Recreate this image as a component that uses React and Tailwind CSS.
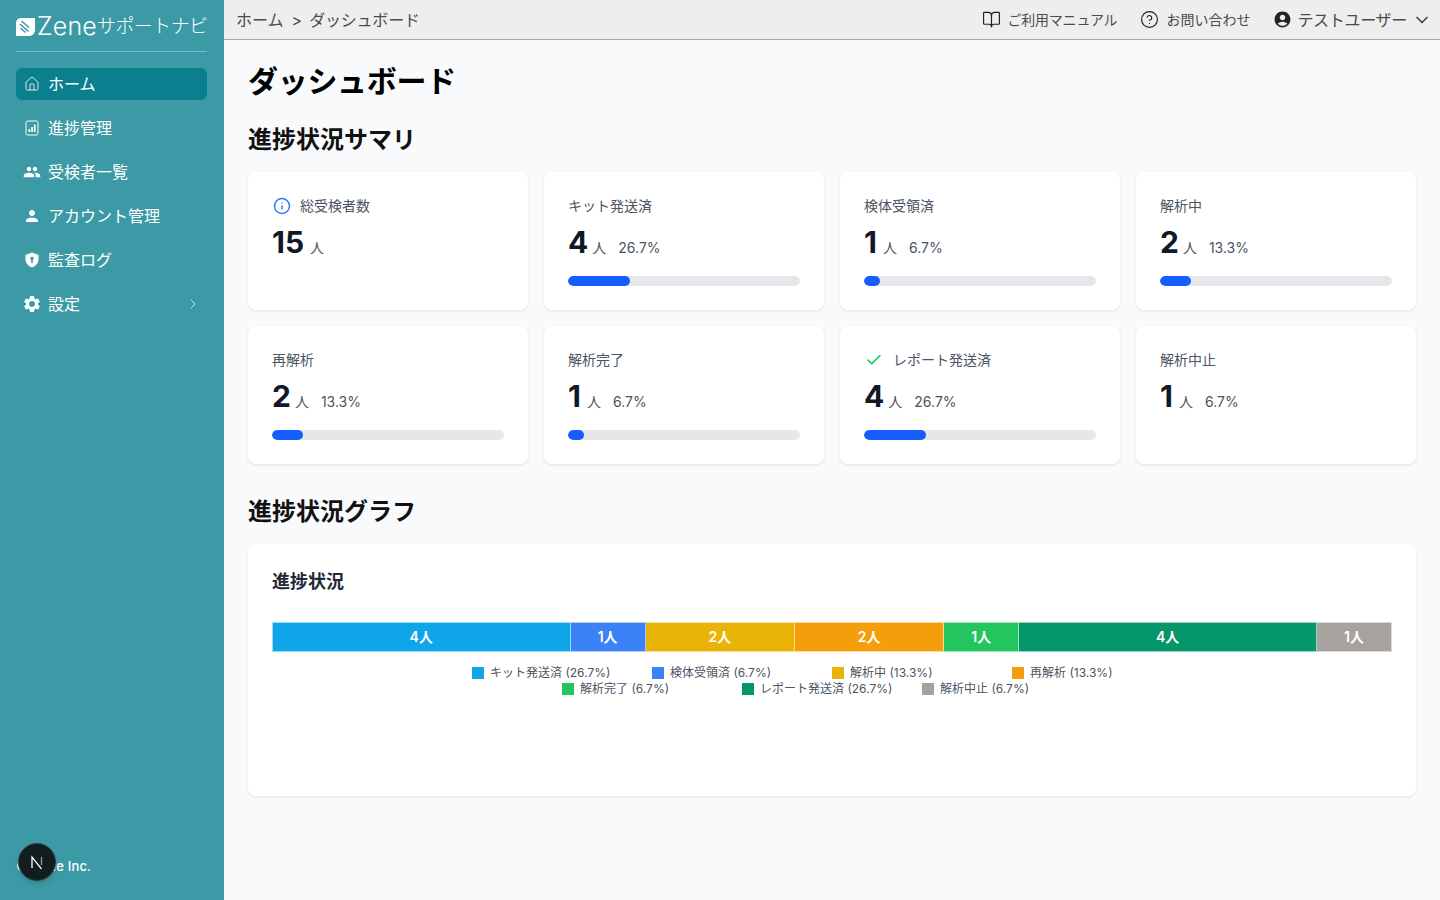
import React from "react";
import { BookOpen, Check, ChevronDown, ChevronRight, CircleHelp, House, Info } from "lucide-react";
import { MdAccountCircle, MdPeople, MdPerson, MdSettings } from "react-icons/md";

const font = "font-['Inter','Noto_Sans_CJK_JP',sans-serif]";

const ProgressIcon = () => (
	<svg viewBox="0 0 16 16" className="h-4 w-4" fill="none">
		<rect x="2" y="1" width="12" height="14" rx="1.5" stroke="white" strokeWidth="1" />
		<rect x="4.5" y="9" width="1.7" height="3" fill="white" />
		<rect x="7.2" y="7" width="1.7" height="5" fill="white" />
		<rect x="9.9" y="4.5" width="1.7" height="7.5" fill="white" />
	</svg>
);

const ShieldIcon = () => (
	<svg viewBox="0 0 16 16" className="h-4 w-4">
		<path
			fillRule="evenodd"
			fill="white"
			d="M8 .5 14.5 3v4.6c0 3.6-2.7 6.7-6.5 7.9-3.8-1.2-6.5-4.3-6.5-7.9V3L8 .5Zm0 4.2a1.7 1.7 0 0 0-.8 3.2V11h1.6V7.9A1.7 1.7 0 0 0 8 4.7Z"
		/>
	</svg>
);

const LogoIcon = () => (
	<svg viewBox="0 0 19 18" className="h-[18px] w-[19px] shrink-0">
		<path fill="white" d="M5 0h14v12c0 3.3-2.7 6-6 6H0V5c0-2.8 2.2-5 5-5Z" />
		<path
			stroke="#3b9aa5"
			strokeWidth="1.6"
			strokeLinecap="round"
			d="M6 3.5 12.5 9M4.5 6.5 12 13M5 10.5 9 14"
		/>
	</svg>
);

const NextBadge = () => (
	<svg viewBox="0 0 14 14" className="h-[14px] w-[14px]" fill="none">
		<path d="M2 13V2l9.5 12" stroke="white" strokeWidth="1.3" />
		<path d="M11.5 2v8" stroke="white" strokeOpacity="0.55" strokeWidth="1.3" />
	</svg>
);

const navItems = [
	{ label: "ホーム", icon: <House className="h-4 w-4" strokeWidth={1.25} />, active: true },
	{ label: "進捗管理", icon: <ProgressIcon /> },
	{ label: "受検者一覧", icon: <MdPeople className="-ml-px h-[18px] w-[18px]" /> },
	{ label: "アカウント管理", icon: <MdPerson className="-ml-px h-[18px] w-[18px]" /> },
	{ label: "監査ログ", icon: <ShieldIcon /> },
	{ label: "設定", icon: <MdSettings className="-ml-0.5 h-5 w-5" />, arrow: true },
];

const cards = [
	{ label: "総受検者数", value: 15, icon: "info" },
	{ label: "キット発送済", value: 4, pct: 26.7 },
	{ label: "検体受領済", value: 1, pct: 6.7 },
	{ label: "解析中", value: 2, pct: 13.3 },
	{ label: "再解析", value: 2, pct: 13.3 },
	{ label: "解析完了", value: 1, pct: 6.7 },
	{ label: "レポート発送済", value: 4, pct: 26.7, icon: "check" },
	{ label: "解析中止", value: 1, pct: 6.7, noBar: true },
];

const segments = [
	{ label: "キット発送済", value: 4, pct: 26.7, color: "bg-[#0ea5e9]", flex: "flex-[4]" },
	{ label: "検体受領済", value: 1, pct: 6.7, color: "bg-[#3b82f6]", flex: "flex-[1]" },
	{ label: "解析中", value: 2, pct: 13.3, color: "bg-[#eab308]", flex: "flex-[2]" },
	{ label: "再解析", value: 2, pct: 13.3, color: "bg-[#f59e0b]", flex: "flex-[2]" },
	{ label: "解析完了", value: 1, pct: 6.7, color: "bg-[#22c55e]", flex: "flex-[1]" },
	{ label: "レポート発送済", value: 4, pct: 26.7, color: "bg-[#059669]", flex: "flex-[4]" },
	{ label: "解析中止", value: 1, pct: 6.7, color: "bg-[#a8a29e]", flex: "flex-[1]" },
];

const Sidebar = () => (
	<aside className="flex h-full w-[224px] shrink-0 flex-col bg-[#3b9aa5] pr-[17px] pl-4 text-white">
		<div className="flex h-[52px] items-center border-b border-white/30 pt-[2px] whitespace-nowrap">
			<LogoIcon />
			<span className="ml-[2px] text-[25px] leading-none font-light tracking-[0.2px]">Zene</span>
			<span className="text-[19px] leading-none font-light tracking-[-0.6px]">サポートナビ</span>
		</div>
		<nav className="mt-4 flex flex-col gap-3">
			{navItems.map((item) => (
				<div
					key={item.label}
					className={`flex h-8 items-center rounded-md px-2 text-base ${item.active ? "bg-[#0a808e]" : ""}`}
				>
					<span className="flex w-6 items-center justify-start">{item.icon}</span>
					<span>{item.label}</span>
					{item.arrow && <ChevronRight className="-mr-0.5 ml-auto h-4 w-4 text-white/80" strokeWidth={1.25} />}
				</div>
			))}
		</nav>
		<div className="mt-auto pb-[25px] text-[13px] leading-[17px] font-medium tracking-[0.2px]">© Zene Inc.</div>
	</aside>
);

const Header = () => (
	<header className="flex h-10 shrink-0 items-center justify-between border-b border-[#a9a9a9] bg-[#eeeeee] pr-2 pl-3 text-[#4b4b4b]">
		<div className="flex items-center gap-2 text-base">
			<span>ホーム</span>
			<span>&gt;</span>
			<span className="-ml-px tracking-[-0.2px]">ダッシュボード</span>
		</div>
		<div className="flex items-center text-sm">
			<BookOpen className="h-[19px] w-[19px] text-[#222]" strokeWidth={1.5} />
			<span className="ml-[6px] tracking-[-0.2px]">ご利用マニュアル</span>
			<CircleHelp className="ml-[23px] h-[19px] w-[19px] text-[#222]" strokeWidth={1.5} />
			<span className="ml-[7px]">お問い合わせ</span>
			<MdAccountCircle className="ml-[23px] h-[19px] w-[19px] text-[#222]" />
			<span className="ml-[5px] text-base tracking-[-0.3px]">テストユーザー</span>
			<ChevronDown className="ml-[5px] h-5 w-5 text-[#444]" strokeWidth={2} />
		</div>
	</header>
);

const StatCard = ({ card }) => (
	<div className="h-[138px] rounded-lg bg-white p-6 shadow-[0_1px_3px_rgba(0,0,0,0.1)]">
		<div className="flex h-5 items-center text-sm text-[#4b5563]">
			{card.icon === "info" && <Info className="mr-[9px] ml-[1px] h-[18px] w-[18px] text-[#2b7fff]" strokeWidth={2} />}
			{card.icon === "check" && <Check className="mr-[10px] ml-px h-[18px] w-[18px] text-[#00c951]" strokeWidth={2} />}
			<span>{card.label}</span>
		</div>
		<div className="mt-2 flex h-9 items-baseline">
			<span className="text-3xl leading-9 font-bold text-[#111827]">{card.value}</span>
			<span className={`text-sm text-[#4b5563] ${card.value === 1 || card.value === 15 ? "ml-1.5" : "ml-1"}`}>人</span>
			{card.pct && <span className="ml-3 text-sm text-[#4b5563]">{card.pct}%</span>}
		</div>
		{card.pct && !card.noBar && (
			<div className="mt-4 h-2.5 overflow-hidden rounded-full bg-[#e5e7eb]">
				<div className="h-full rounded-full bg-[#155dfc]" style={{ width: `${card.pct}%` }} />
			</div>
		)}
	</div>
);

const Chart = () => (
	<div className="h-[252px] rounded-lg bg-white p-6 shadow-[0_1px_3px_rgba(0,0,0,0.1)]">
		<h3 className="text-lg leading-7 font-bold text-[#1f2937]">進捗状況</h3>
		<div className="mt-[26px] flex h-[30px]">
			{segments.map((s) => (
				<div
					key={s.label}
					className={`flex items-center justify-center border-y border-r border-white/60 text-sm font-semibold text-white first:border-l ${s.color} ${s.flex}`}
				>
					{s.value}人
				</div>
			))}
		</div>
		<div className="mx-auto mt-[13px] flex w-[720px] flex-wrap justify-center">
			{segments.map((s) => (
				<div key={s.label} className="flex h-4 w-[180px] items-center text-xs text-[#4b5563]">
					<span className={`mr-1.5 h-3 w-3 ${s.color}`} />
					<span>
						{s.label} ({s.pct}%)
					</span>
				</div>
			))}
		</div>
	</div>
);

export default function App() {
	return (
		<div className={`relative flex h-[900px] w-[1440px] overflow-hidden bg-[#f9fafb] ${font}`}>
			<Sidebar />
			<div className="flex min-w-0 flex-1 flex-col">
				<Header />
				<main className="flex-1 px-6 pt-[21px]">
					<h1 className="text-3xl leading-10 font-bold tracking-[-0.3px] text-black">ダッシュボード</h1>
					<h2 className="mt-[23px] text-2xl leading-8 font-bold text-[#111]">進捗状況サマリ</h2>
					<div className="mt-4 grid grid-cols-4 gap-4">
						{cards.map((card) => (
							<StatCard key={card.label} card={card} />
						))}
					</div>
					<h2 className="mt-[32px] text-2xl leading-8 font-bold text-[#111]">進捗状況グラフ</h2>
					<div className="mt-4">
						<Chart />
					</div>
				</main>
			</div>
			{/* next.js dev badge */}
			<div className="absolute top-[843px] left-[18px] flex h-[38px] w-[38px] items-center justify-center rounded-full border border-[#3a3a3a] bg-[#111d1f] shadow-md">
				<NextBadge />
			</div>
		</div>
	);
}
